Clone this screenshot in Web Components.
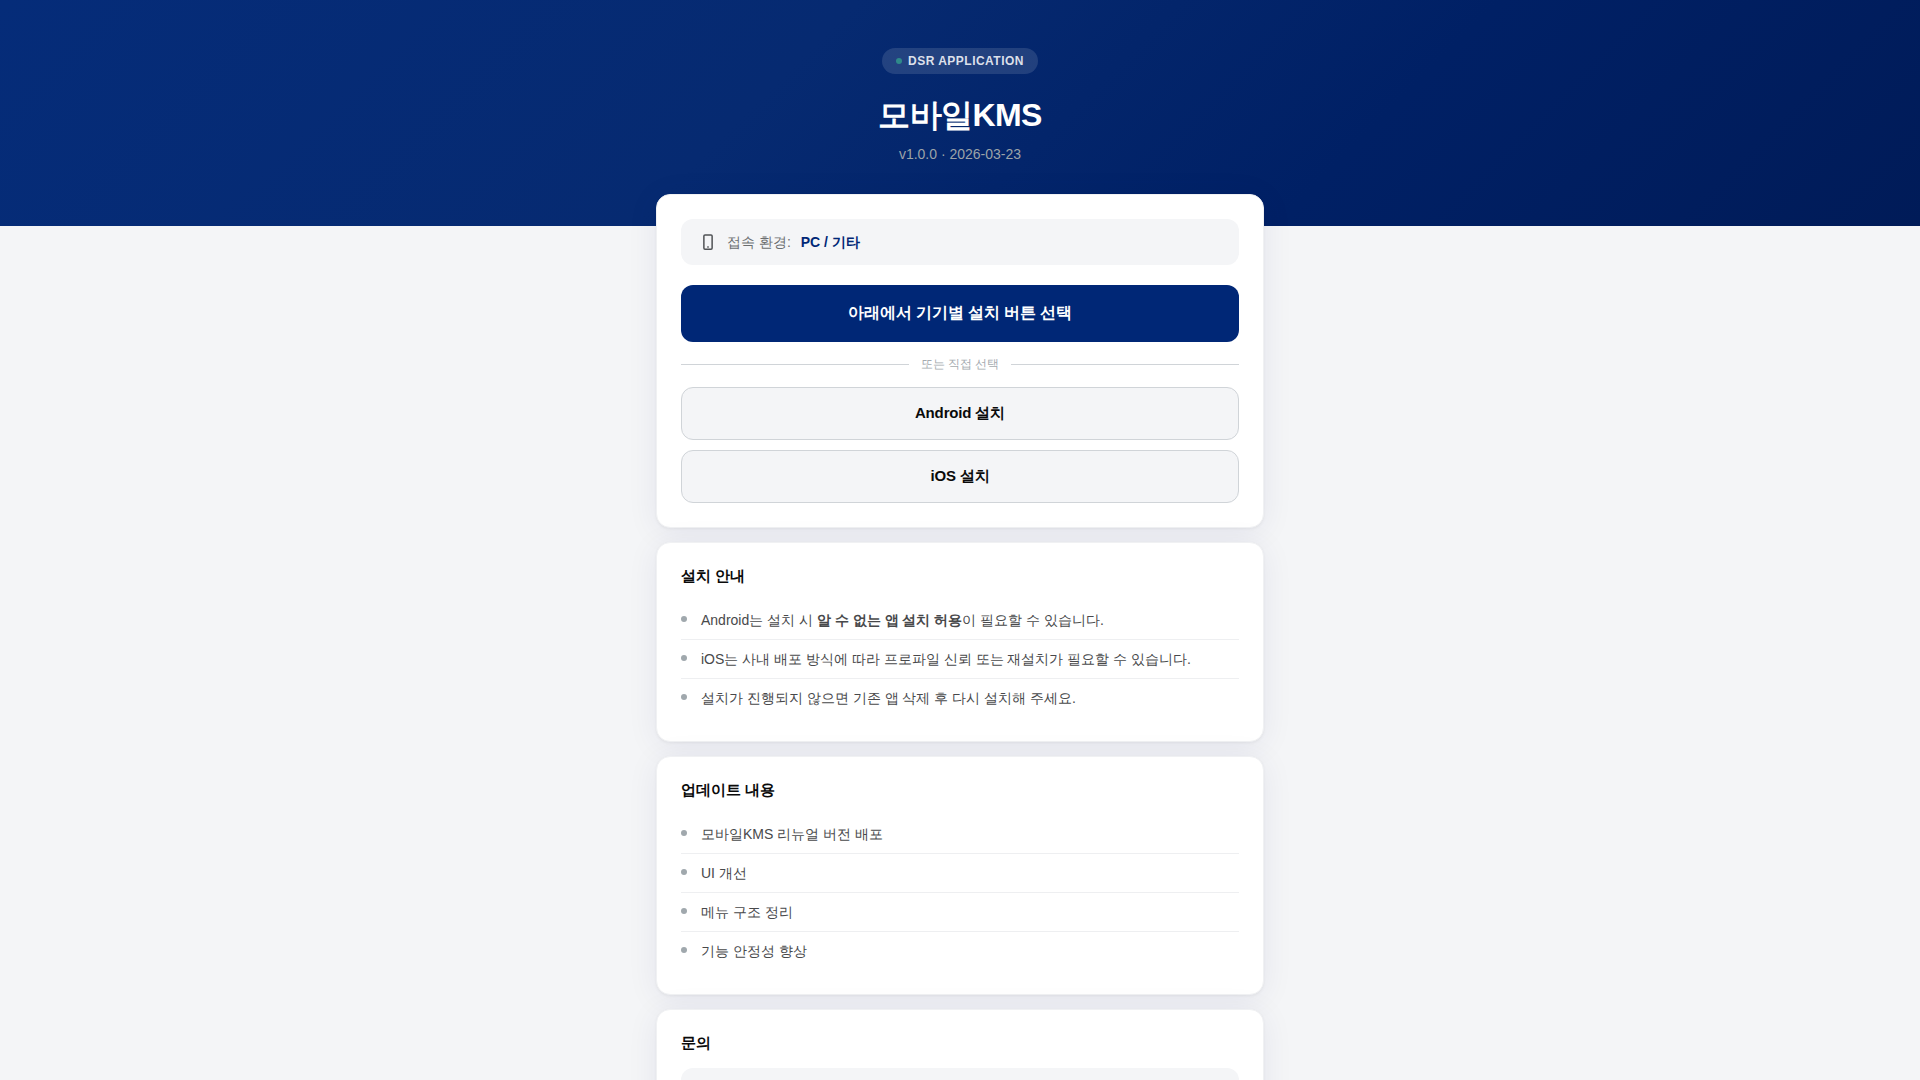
<!DOCTYPE html>
<html lang="ko">
<head>
<meta charset="UTF-8">
<meta name="viewport" content="width=device-width, initial-scale=1.0">
<title>모바일KMS</title>
<style>
    body {
        margin: 0;
        background: #f4f5f7;
        color: #0a0a0a;
        font-family: "Liberation Sans", sans-serif;
        font-size: 14px;
    }
</style>
</head>
<body>
<install-page>
    <app-header slot="header" badge="DSR APPLICATION" version="v1.0.0 · 2026-03-23">모바일KMS</app-header>

    <info-card>
        <env-box label="접속 환경:">PC / 기타</env-box>
        <install-button primary>아래에서 기기별 설치 버튼 선택</install-button>
        <text-divider>또는 직접 선택</text-divider>
        <install-button>Android 설치</install-button>
        <install-button>iOS 설치</install-button>
    </info-card>

    <info-card heading="설치 안내">
        <note-list>
            <note-item>Android는 설치 시 <strong>알 수 없는 앱 설치 허용</strong>이 필요할 수 있습니다.</note-item>
            <note-item>iOS는 사내 배포 방식에 따라 프로파일 신뢰 또는 재설치가 필요할 수 있습니다.</note-item>
            <note-item>설치가 진행되지 않으면 기존 앱 삭제 후 다시 설치해 주세요.</note-item>
        </note-list>
    </info-card>

    <info-card heading="업데이트 내용">
        <note-list>
            <note-item>모바일KMS 리뉴얼 버전 배포</note-item>
            <note-item>UI 개선</note-item>
            <note-item>메뉴 구조 정리</note-item>
            <note-item>기능 안정성 향상</note-item>
        </note-list>
    </info-card>

    <info-card heading="문의">
        <contact-box></contact-box>
    </info-card>
</install-page>

<script>
class InstallPage extends HTMLElement {
    constructor() {
        super();
        this.attachShadow({ mode: 'open' });
        this.shadowRoot.innerHTML = `
            <style>
            :host { display: block; }
            main {
                box-sizing: border-box;
                position: relative;
                max-width: 640px;
                margin: -32px auto 0;
                padding: 0 16px 48px;
                display: flex;
                flex-direction: column;
                gap: 14px;
            }
            </style>
            <slot name="header"></slot>
            <main><slot></slot></main>
        `;
    }
}

class AppHeader extends HTMLElement {
    constructor() {
        super();
        this.attachShadow({ mode: 'open' });
        this.shadowRoot.innerHTML = `
            <style>
            :host { display: block; }
            header {
                display: flex;
                flex-direction: column;
                align-items: center;
                padding: 48px 24px 62px;
                background: linear-gradient(135deg, #052c79 0%, #062a71 40%, #002065 70%, #001b58 100%);
                color: #fff;
                text-align: center;
            }
            .badge {
                display: flex;
                align-items: center;
                gap: 6px;
                padding: 0 14px;
                border-radius: 13px;
                background: rgba(255, 255, 255, 0.12);
                color: rgba(255, 255, 255, 0.85);
                font-size: 12px;
                font-weight: 700;
                line-height: 26px;
                letter-spacing: 0.04em;
            }
            .dot { width: 6px; height: 6px; border-radius: 50%; background: #2f8a8a; }
            h1 {
                margin: 20px 0 8px;
                font-size: 32px;
                font-weight: 700;
                line-height: 42px;
                letter-spacing: -0.02em;
            }
            p { margin: 0; color: #9ca3a8; font-size: 14px; line-height: 20px; }
            </style>
            <header>
                <div class="badge"><span class="dot"></span><span class="badge-text"></span></div>
                <h1><slot></slot></h1>
                <p></p>
            </header>
        `;
    }

    connectedCallback() {
        this.shadowRoot.querySelector('.badge-text').textContent = this.getAttribute('badge');
        this.shadowRoot.querySelector('p').textContent = this.getAttribute('version');
    }
}

class InfoCard extends HTMLElement {
    constructor() {
        super();
        this.attachShadow({ mode: 'open' });
        this.shadowRoot.innerHTML = `
            <style>
            :host { display: block; }
            section {
                padding: 24px;
                border: 1px solid #f0f1f3;
                border-radius: 14px;
                background: #fff;
                box-shadow: 0 1px 3px rgba(0, 0, 0, 0.05), 0 4px 32px rgba(0, 0, 100, 0.07);
            }
            h2 { margin: 0 0 16px; font-size: 15px; font-weight: 700; line-height: 18px; }
            h2[hidden] { display: none; }
            </style>
            <section>
                <h2 hidden></h2>
                <slot></slot>
            </section>
        `;
    }

    connectedCallback() {
        const heading = this.shadowRoot.querySelector('h2');
        if (this.hasAttribute('heading')) {
            heading.textContent = this.getAttribute('heading');
            heading.hidden = false;
        }
    }
}

class EnvBox extends HTMLElement {
    constructor() {
        super();
        this.attachShadow({ mode: 'open' });
        this.shadowRoot.innerHTML = `
            <style>
            :host { display: block; margin-bottom: 20px; }
            .env {
                display: flex;
                align-items: center;
                gap: 10px;
                padding: 12px 18px;
                border-radius: 12px;
                background: #f4f5f7;
                line-height: 21px;
                min-height: 22px;
            }
            svg { display: block; color: #505356; }
            .label { color: #6b6e70; }
            .value { color: #002776; font-weight: 700; }
            </style>
            <div class="env">
                <svg width="18" height="18" viewBox="0 0 24 24" fill="none" stroke="currentColor" stroke-width="2" aria-hidden="true">
                    <rect x="6.5" y="2.5" width="11" height="19" rx="1.5"/>
                    <path d="M11 18.5h2"/>
                </svg>
                <span class="label"></span>
                <span class="value"><slot></slot></span>
            </div>
        `;
    }

    connectedCallback() {
        this.shadowRoot.querySelector('.label').textContent = this.getAttribute('label');
    }
}

class InstallButton extends HTMLElement {
    constructor() {
        super();
        this.attachShadow({ mode: 'open' });
        this.shadowRoot.innerHTML = `
            <style>
            :host { display: block; }
            :host(:not([primary]):not(:last-of-type)) { margin-bottom: 10px; }
            button {
                display: block;
                width: 100%;
                padding: 15px 24px 16px;
                border: 1px solid #d0d4d8;
                border-radius: 12px;
                background: #f4f5f7;
                color: #0a0a0a;
                font-family: inherit;
                font-size: 15px;
                font-weight: 700;
                line-height: 20px;
                letter-spacing: -0.01em;
                cursor: pointer;
            }
            :host([primary]) button {
                padding: 17px 24px 18px;
                border: 0;
                background: #002776;
                color: #fff;
                font-size: 16px;
                line-height: 22px;
            }
            </style>
            <button type="button"><slot></slot></button>
        `;
    }
}

class TextDivider extends HTMLElement {
    constructor() {
        super();
        this.attachShadow({ mode: 'open' });
        this.shadowRoot.innerHTML = `
            <style>
            :host {
                display: flex;
                align-items: center;
                gap: 12px;
                margin: 14px 0;
                color: #a5abaf;
                font-size: 12px;
                line-height: 17px;
            }
            :host::before, :host::after { content: ""; flex: 1; height: 1px; background: #d0d4d8; }
            </style>
            <slot></slot>
        `;
    }
}

class NoteList extends HTMLElement {
    constructor() {
        super();
        this.attachShadow({ mode: 'open' });
        this.shadowRoot.innerHTML = `
            <style>
            :host { display: block; }
            </style>
            <div role="list"><slot></slot></div>
        `;
    }
}

class NoteItem extends HTMLElement {
    constructor() {
        super();
        this.attachShadow({ mode: 'open' });
        this.shadowRoot.innerHTML = `
            <style>
            :host {
                display: flex;
                gap: 14px;
                padding: 8px 0;
                border-bottom: 1px solid #eeeff1;
                color: #48494b;
                line-height: 22px;
            }
            :host(:last-of-type) { border-bottom: 0; }
            .bullet {
                flex: none;
                width: 6px;
                height: 6px;
                margin-top: 7px;
                border-radius: 50%;
                background: #a0a8ad;
            }
            </style>
            <span class="bullet"></span>
            <div><slot></slot></div>
        `;
    }

    connectedCallback() {
        this.setAttribute('role', 'listitem');
    }
}

class ContactBox extends HTMLElement {
    constructor() {
        super();
        this.attachShadow({ mode: 'open' });
        this.shadowRoot.innerHTML = `
            <style>
            :host {
                display: block;
                min-height: 22px;
                padding: 14px 18px;
                border-radius: 12px;
                background: #f4f5f7;
            }
            </style>
            <slot></slot>
        `;
    }
}

customElements.define('install-page', InstallPage);
customElements.define('app-header', AppHeader);
customElements.define('info-card', InfoCard);
customElements.define('env-box', EnvBox);
customElements.define('install-button', InstallButton);
customElements.define('text-divider', TextDivider);
customElements.define('note-list', NoteList);
customElements.define('note-item', NoteItem);
customElements.define('contact-box', ContactBox);
</script>
</body>
</html>
